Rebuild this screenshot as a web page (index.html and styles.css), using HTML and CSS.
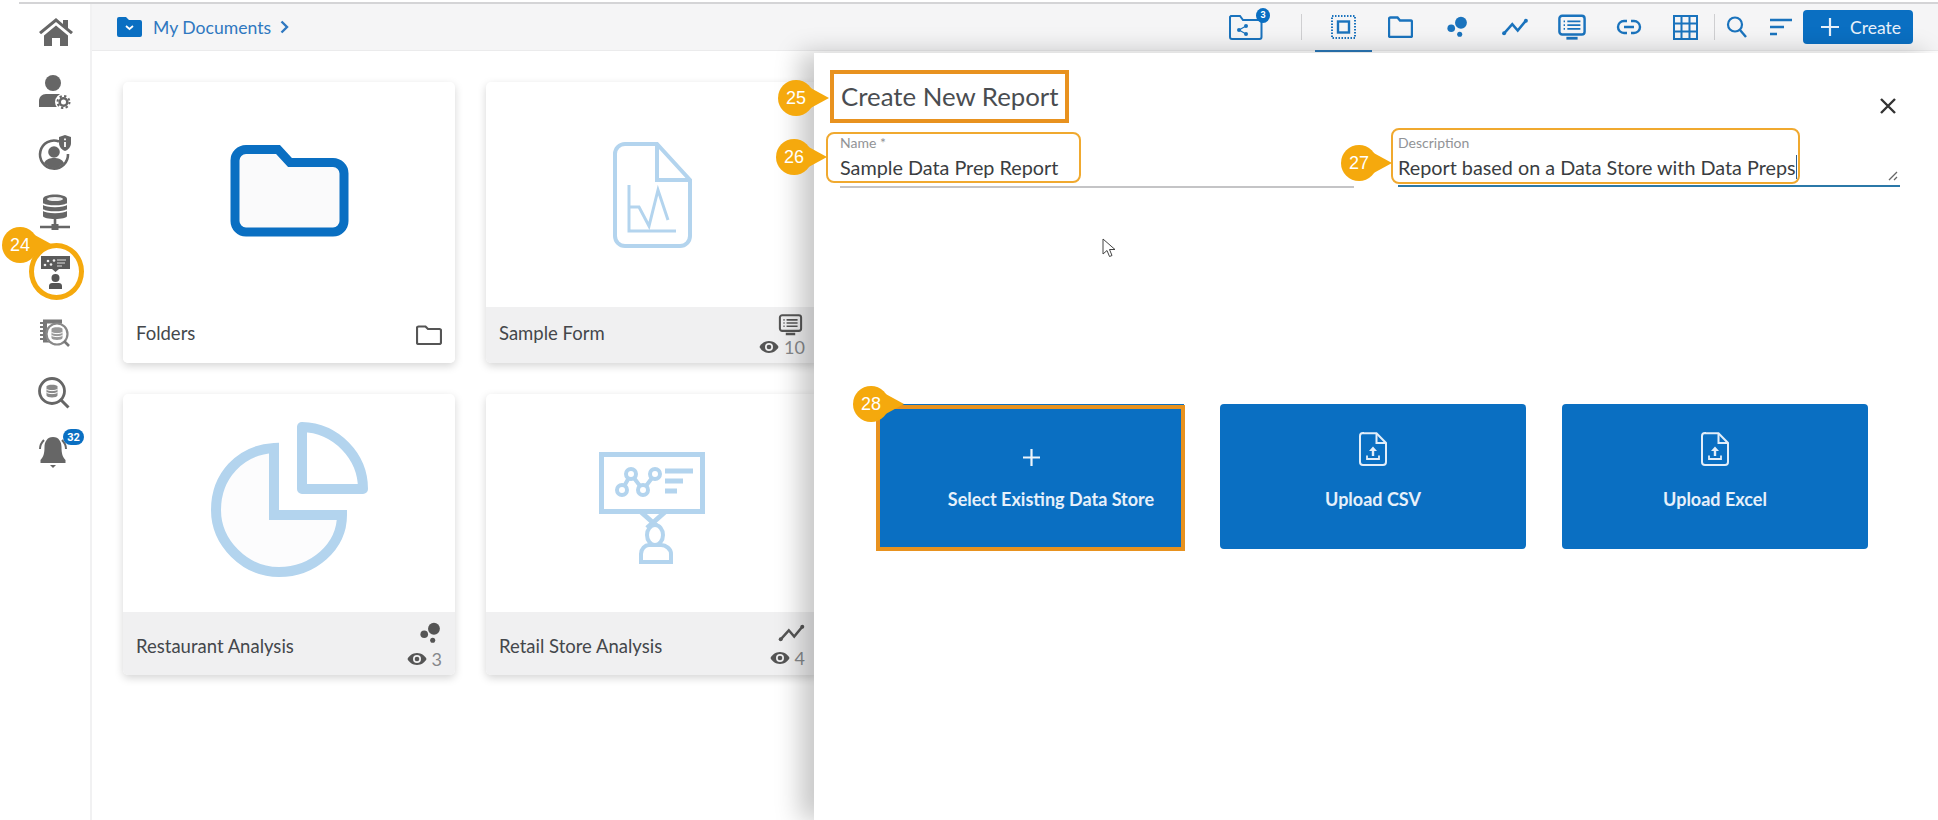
FILE: index.html
```html
<!DOCTYPE html>
<html lang="en">
<head>
<meta charset="utf-8">
<title>Create New Report</title>
<link rel="stylesheet" href="styles.css">
</head>
<body>
<svg class="defs" width="0" height="0" aria-hidden="true">
  <symbol id="eye" viewBox="0 0 20 14"><path d="M10 1C5.500 1 2 3.800 .5 7 2 10.200 5.500 13 10 13s8-2.800 9.500-6C18 3.800 14.500 1 10 1z" fill="#555"/><circle cx="10" cy="7" r="4" fill="#f0f0f1"/><circle cx="10" cy="7" r="2.300" fill="#555"/></symbol>
  <symbol id="form" viewBox="0 0 30 28"><rect x="1.500" y="1.500" width="27" height="20" rx="3" fill="none" stroke="currentColor" stroke-width="2.600"/><path d="M10 7.500h14M10 11.500h14M10 15.500h14M6 7.500h1.500M6 11.500h1.500M6 15.500h1.500" stroke="currentColor" stroke-width="2"/><path d="M9 24h12v3H9z" fill="currentColor"/></symbol>
  <symbol id="dots" viewBox="0 0 26 26"><circle cx="16.500" cy="8" r="7" fill="currentColor"/><circle cx="5" cy="14.500" r="4.500" fill="currentColor"/><circle cx="15" cy="21.500" r="3" fill="currentColor"/></symbol>
  <symbol id="trend" viewBox="0 0 30 22"><path d="M3 18l9-10 6 7 9-11" fill="none" stroke="currentColor" stroke-width="2.800"/><circle cx="3" cy="18" r="2.200" fill="currentColor"/><circle cx="27" cy="4" r="2.200" fill="currentColor"/></symbol>
  <symbol id="upload" viewBox="0 0 28 34"><path d="M4 1.200h13.500L27 11v19a3 3 0 0 1-3 3H4a3 3 0 0 1-3-3V4a3 3 0 0 1 3-3z" fill="none" stroke="#e3eef9" stroke-width="2"/><path d="M17.500 1.500V11H27" fill="none" stroke="#e3eef9" stroke-width="2"/><path d="M14 14.500l4 4.500h-2.800v5h-2.400v-5H10z" fill="#e3eef9"/><path d="M8 23.500V27h12v-3.500" fill="none" stroke="#e3eef9" stroke-width="1.800"/></symbol>
</svg>

<div class="shell">
  <aside class="sidebar">
    <ul class="nav">
      <li class="nav-item"><svg width="40" height="40" viewBox="0 0 40 40"><path d="M4 20L21 6l7 6V8h5v8l5 4-2 2.300L21 10 6 22.300zM9 23.500L21 13.500l12 10V34h-8v-8h-8v8H9z" fill="#666"/></svg></li>
      <li class="nav-item"><svg width="40" height="40" viewBox="0 0 40 40"><circle cx="18" cy="11" r="8" fill="#666"/><path d="M4 35v-6c0-4 3-7 7-7h13c3 0 5 3 5 6v7z" fill="#666"/><circle cx="28.500" cy="30" r="8.500" fill="#fff"/><circle cx="28.500" cy="30" r="3.800" fill="#fff" stroke="#666" stroke-width="2.600"/><circle cx="28.500" cy="30" r="6" fill="none" stroke="#666" stroke-width="2" stroke-dasharray="2.300 2.400"/></svg></li>
      <li class="nav-item"><svg width="40" height="40" viewBox="0 0 40 40"><path d="M24 9.500A14 14 0 1 0 33 22" fill="none" stroke="#666" stroke-width="2.600"/><circle cx="19" cy="20" r="5.800" fill="#666"/><path d="M9 31c2-4 6-5 10-5s8 1 10 5c-3 3-6 5-10 5s-7-2-10-5z" fill="#666"/><path d="M30 3l6 2v6c0 4-3 7-6 8-3-1-6-4-6-8V5z" fill="#666"/><path d="M30 6.500v1.800M30 10v5" stroke="#fff" stroke-width="1.800"/></svg></li>
      <li class="nav-item"><svg width="40" height="40" viewBox="0 0 40 40"><path d="M8 7c0-6 24-6 24 0v17c0 4-24 4-24 0z" fill="#666"/><ellipse cx="20" cy="7" rx="8" ry="2" fill="#eee"/><path d="M8 12c4 3 20 3 24 0M8 18c4 3 20 3 24 0" stroke="#fff" stroke-width="1.800" fill="none"/><path d="M20 26v9M5 35h30" stroke="#666" stroke-width="2.600"/><rect x="16.500" y="32" width="7" height="6" fill="#666"/></svg></li>
      <li class="nav-item nav-item-on">
        <svg width="40" height="40" viewBox="0 0 40 40"><path d="M6 4h29v13H24l-3.500 3-3.500-3H6z" fill="#5a5a5a"/><g fill="#eee"><circle cx="10" cy="13" r="1.300"/><circle cx="13" cy="9" r="1.300"/><circle cx="16" cy="12.500" r="1.300"/><circle cx="19" cy="8.500" r="1.300"/></g><path d="M22 8h9M22 11h8M22 14h5" stroke="#ddd" stroke-width="1.200"/><circle cx="20.500" cy="26" r="4" fill="#555"/><path d="M14 37v-3c0-2 1.500-3 3-3h7c1.500 0 3 1 3 3v3z" fill="#555"/></svg>
        <span class="ring"></span>
        <span class="badge badge-24">24</span>
      </li>
      <li class="nav-item"><svg width="40" height="40" viewBox="0 0 40 40"><path d="M8 7.500h19v4H12v17h3v2H8z" fill="#777"/><path d="M5 11h5M5 15h5M5 19h5M5 23h5M5 27h5" stroke="#777" stroke-width="2"/><circle cx="22" cy="22" r="10.500" fill="#fff" stroke="#888" stroke-width="2.200"/><path d="M16.500 17c0-2.500 11-2.500 11 0v9c0 2.500-11 2.500-11 0z" fill="#999"/><path d="M16.500 20.500c3 1.500 8 1.500 11 0M16.500 23.500c3 1.500 8 1.500 11 0" stroke="#fff" fill="none"/><path d="M29 29l5 5" stroke="#777" stroke-width="2.600"/></svg></li>
      <li class="nav-item"><svg width="40" height="40" viewBox="0 0 40 40"><circle cx="17" cy="19" r="12.500" fill="none" stroke="#666" stroke-width="2.800"/><path d="M26 28l7.500 7.500" stroke="#666" stroke-width="3"/><path d="M11.500 14.500c0-2.500 11-2.500 11 0v9c0 2.500-11 2.500-11 0z" fill="#888"/><path d="M11.500 17.500c3 1.500 8 1.500 11 0M11.500 20.500c3 1.500 8 1.500 11 0" stroke="#fff" fill="none"/></svg></li>
      <li class="nav-item"><svg width="40" height="40" viewBox="0 0 40 40"><path d="M18 5c-6 0-8.500 5-8.500 10 0 6-1 10-4 13v3h25v-3c-3-3-4-7-4-13 0-5-2.500-10-8.500-10z" fill="#666"/><path d="M15 33h6l-3 3z" fill="#666"/><path d="M5 17c0-4 1.500-6.500 4-9M31 17c0-4-1.500-6.500-4-9" stroke="#666" stroke-width="2" fill="none"/></svg><span class="count count-nav">32</span></li>
    </ul>
  </aside>

  <div class="main">
    <header class="topbar">
      <div class="crumb">
        <svg width="25" height="20" viewBox="0 0 25 20"><path d="M2 0h7l3 3h11a2 2 0 0 1 2 2v13a2 2 0 0 1-2 2H2a2 2 0 0 1-2-2V2a2 2 0 0 1 2-2z" fill="#0a6fc2"/><path d="M9 9l3.500 3L16 9" fill="none" stroke="#fff" stroke-width="1.800"/></svg>
        <span class="crumb-text">My Documents</span>
        <svg width="9" height="14" viewBox="0 0 9 14"><path d="M1.500 1.500L7 7l-5.500 5.500" fill="none" stroke="#2f78c0" stroke-width="2.400"/></svg>
      </div>
      <div class="tools">
        <div class="share">
          <svg width="34" height="25" viewBox="0 0 34 25"><path d="M2 1h9l3 4h17a2 2 0 0 1 1.500 1.500V22a2 2 0 0 1-2 2H3a2 2 0 0 1-2-2V2z" fill="none" stroke="#1a73bd" stroke-width="2"/><g fill="#1a73bd"><circle cx="10" cy="15" r="2"/><circle cx="17" cy="11" r="2"/><circle cx="17" cy="19" r="2"/></g><path d="M10 15l7-4M10 15l7 4" stroke="#1a73bd" stroke-width="1.200"/></svg>
          <span class="count count-share">3</span>
        </div>
        <span class="divider divider-share"></span>
        <span class="tool tool-on"><svg width="25" height="24" viewBox="0 0 25 24"><rect x="1" y="1" width="23" height="22" fill="none" stroke="#1a73bd" stroke-width="2" stroke-dasharray="1.500 1.500"/><rect x="7" y="6.500" width="11" height="11" fill="none" stroke="#1a73bd" stroke-width="2.400"/></svg></span>
        <span class="tool"><svg width="25" height="22" viewBox="0 0 25 22"><path d="M2.500 1.500h7l2.500 3h10.500a1.500 1.500 0 0 1 1.500 1.500v13.500a1.500 1.500 0 0 1-1.500 1.500h-20A1.500 1.500 0 0 1 1 19.500V3a1.500 1.500 0 0 1 1.500-1.500z" fill="none" stroke="#1a73bd" stroke-width="2.400"/></svg></span>
        <span class="tool"><svg class="ink" width="22" height="22"><use href="#dots"/></svg></span>
        <span class="tool"><svg class="ink" width="28" height="20"><use href="#trend"/></svg></span>
        <span class="tool"><svg class="ink" width="28" height="27"><use href="#form"/></svg></span>
        <span class="tool"><svg width="26" height="16" viewBox="0 0 26 16"><path d="M11 2H8a6 6 0 0 0 0 12h3M15 2h3a6 6 0 0 1 0 12h-3M8 8h10" fill="none" stroke="#1a73bd" stroke-width="2.400"/></svg></span>
        <span class="tool"><svg width="25" height="25" viewBox="0 0 25 25"><path d="M1 1h23v23H1zM8.500 1v23M16.500 1v23M1 8.500h23M1 16.500h23" fill="none" stroke="#1a73bd" stroke-width="2"/></svg></span>
        <span class="divider"></span>
        <span class="tool tool-sm"><svg width="22" height="24" viewBox="0 0 22 24"><circle cx="9" cy="9.500" r="7" fill="none" stroke="#1a73bd" stroke-width="2.200"/><path d="M14 15l6 7" stroke="#1a73bd" stroke-width="2.400"/></svg></span>
        <span class="tool tool-md"><svg width="22" height="18" viewBox="0 0 22 18"><path d="M0 2h22M0 9h14M0 16h7" stroke="#1a73bd" stroke-width="2.400"/></svg></span>
        <button class="create" type="button"><svg width="18" height="18" viewBox="0 0 18 18"><path d="M9 0v18M0 9h18" stroke="#e8f1fa" stroke-width="2.200"/></svg>Create</button>
      </div>
    </header>

    <section class="cards">
      <article class="card">
        <div class="card-art"><svg class="art-up" width="119" height="92" viewBox="0 0 119 92"><path d="M16 4.500h32L60 17.500h43a11 11 0 0 1 11 11V76a11 11 0 0 1-11 11H16A11 11 0 0 1 5 76V15.500a11 11 0 0 1 11-11z" fill="#fafafb" stroke="#0a6fc2" stroke-width="9"/></svg></div>
        <footer class="card-foot card-foot-plain">
          <span class="card-name">Folders</span>
          <span class="card-meta"><svg width="26" height="20" viewBox="0 0 26 20"><path d="M2.500 1.500h7L12 4h11.500A1.500 1.500 0 0 1 25 5.500v12a1.500 1.500 0 0 1-1.500 1.500h-21A1.500 1.500 0 0 1 1 17.500V3a1.500 1.500 0 0 1 1.500-1.500z" fill="none" stroke="#555" stroke-width="2.200"/></svg></span>
        </footer>
      </article>
      <article class="card">
        <div class="card-art"><svg width="79" height="106" viewBox="0 0 79 106"><path d="M12 2h32l33 36v56a10 10 0 0 1-10 10H12A10 10 0 0 1 2 94V12A10 10 0 0 1 12 2zM44 2v36h33" fill="none" stroke="#b3d4ee" stroke-width="4"/><path d="M16 43v46h47" fill="none" stroke="#b3d4ee" stroke-width="3"/><path d="M16 65h10l10 19 9-36 10 30" fill="none" stroke="#b3d4ee" stroke-width="3"/></svg></div>
        <footer class="card-foot">
          <span class="card-name">Sample Form</span>
          <span class="card-meta"><svg class="ink-dark" width="29" height="22"><use href="#form"/></svg><span class="views"><svg width="20" height="14"><use href="#eye"/></svg>10</span></span>
        </footer>
      </article>
      <article class="card card-low">
        <div class="card-art"><svg class="art-up" width="157" height="155" viewBox="0 0 157 155"><path d="M91 5v62h61C152 34 125 6 91 5z" fill="none" stroke="#b3d4ee" stroke-width="10" stroke-linejoin="round"/><path d="M63 26v67h68c0 32-29 57-63 57S5 121 5 88c0-34 24-60 58-62z" fill="#fcfcfd" stroke="#b3d4ee" stroke-width="10"/></svg></div>
        <footer class="card-foot">
          <span class="card-name">Restaurant Analysis</span>
          <span class="card-meta"><svg class="ink-dark" width="22" height="22"><use href="#dots"/></svg><span class="views"><svg width="20" height="14"><use href="#eye"/></svg>3</span></span>
        </footer>
      </article>
      <article class="card card-low">
        <div class="card-art"><svg class="art-down" width="106" height="112" viewBox="0 0 106 112"><path d="M2.500 2.500h101v57h-101z" fill="none" stroke="#b3d4ee" stroke-width="5"/><path d="M23 38l9-16 12 16 12-16" fill="none" stroke="#b3d4ee" stroke-width="4"/><g fill="#fff" stroke="#b3d4ee" stroke-width="4"><circle cx="23" cy="38" r="5"/><circle cx="32" cy="22" r="5"/><circle cx="44" cy="38" r="5"/><circle cx="56" cy="22" r="5"/></g><path d="M66 19h28M66 29h18M66 39h12M42 60l18 16M66 60L48 76" fill="none" stroke="#b3d4ee" stroke-width="5"/><ellipse cx="56" cy="83" rx="8" ry="10" fill="#fff" stroke="#b3d4ee" stroke-width="4"/><path d="M42 110v-8c0-5 4-9 8-9h12c5 0 10 4 10 9v8z" fill="#fff" stroke="#b3d4ee" stroke-width="4"/></svg></div>
        <footer class="card-foot">
          <span class="card-name">Retail Store Analysis</span>
          <span class="card-meta"><svg class="ink-dark" width="27" height="20"><use href="#trend"/></svg><span class="views"><svg width="20" height="14"><use href="#eye"/></svg>4</span></span>
        </footer>
      </article>
    </section>

    <section class="panel">
      <div class="panel-head">
        <h2 class="panel-title">Create New Report</h2>
        <button class="close" type="button" aria-label="Close"><svg width="16" height="16" viewBox="0 0 16 16"><path d="M1 1l14 14M15 1L1 15" stroke="#333" stroke-width="2.400"/></svg></button>
      </div>
      <div class="fields">
        <div class="field">
          <label class="field-label">Name *</label>
          <div class="field-value">Sample Data Prep Report</div>
          <span class="mark mark-name"></span>
        </div>
        <div class="field field-on">
          <label class="field-label">Description</label>
          <div class="field-value"><span class="caret">Report based on a Data Store with Data Preps</span></div>
          <span class="mark mark-desc"></span>
          <svg class="grip" width="10" height="10" viewBox="0 0 10 10"><path d="M1 9l8-8M6 9l3-3" stroke="#666" stroke-width="1.300"/></svg>
        </div>
      </div>
      <div class="actions">
        <button class="action action-on" type="button">
          <span class="action-icon"><svg width="17" height="17" viewBox="0 0 17 17"><path d="M8.500 0v17M0 8.500h17" stroke="#eef5fb" stroke-width="2.200"/></svg></span>
          <span class="action-text action-text-shift">Select Existing Data Store</span>
        </button>
        <button class="action" type="button">
          <span class="action-icon"><svg width="28" height="34"><use href="#upload"/></svg></span>
          <span class="action-text">Upload CSV</span>
        </button>
        <button class="action" type="button">
          <span class="action-icon"><svg width="28" height="34"><use href="#upload"/></svg></span>
          <span class="action-text">Upload Excel</span>
        </button>
      </div>
      <span class="badge badge-25">25</span>
      <span class="badge badge-26">26</span>
      <span class="badge badge-27">27</span>
      <span class="badge badge-28">28</span>
      <svg class="pointer" width="14" height="20" viewBox="0 0 14 20"><path d="M1 1v15l4-3.500 2.500 6 2.500-1-2.500-6H13z" fill="#fff" stroke="#444" stroke-width="1"/></svg>
    </section>
  </div>
</div>
</body>
</html>
```
FILE: styles.css
```css
* { box-sizing: border-box; }
html, body { margin: 0; padding: 0; height: 100%; }
body {
  overflow: hidden;
  background: #fff;
  font-family: "Lato", "Noto Sans", sans-serif;
  color: #3f4247;
}
.defs { position: absolute; }
ul { list-style: none; margin: 0; padding: 0; }
button { font: inherit; border: 0; padding: 0; background: none; }
svg { display: block; flex: none; }

.shell {
  display: flex;
  height: 818px;
  margin: 2px 0 0 19px;
  border-top: 2px solid #d4d4d6;
}

/* sidebar */
.sidebar { width: 73px; flex: none; border-right: 2px solid #f1f1f2; background: #fff; }
.nav { margin-top: -2px; }
.nav-item { position: relative; height: 60px; display: flex; align-items: center; padding-left: 16px; }
.ring {
  position: absolute; left: 10px; top: 1px; width: 55px; height: 57px;
  border: 5px solid #f5a90d; border-radius: 50%;
}
.count {
  position: absolute; display: flex; align-items: center; justify-content: center;
  background: #0a6fc2; color: #fff; font-weight: 700; font-family: "Roboto", sans-serif;
}
.count-nav { left: 44px; top: 7px; width: 21px; height: 16px; border-radius: 8px; font-size: 11px; }
.count-share { left: 27px; top: -7px; width: 14px; height: 15px; border-radius: 50%; font-size: 9px; }

/* callout badges */
.badge {
  position: absolute; width: 36px; height: 36px; border-radius: 50%;
  background: #f5a90d; color: #fff; z-index: 5;
  font: 18px/36px "Liberation Sans", Arial, sans-serif; text-align: center;
}
.badge::after {
  content: ""; position: absolute; left: 18px; top: 0; width: 33px; height: 36px;
  background: #f5a90d; clip-path: polygon(0 0, 100% 50%, 0 100%); z-index: -1;
}
.badge-24 { left: -17px; top: -15px; }
.badge-25 { left: -36px; top: 27px; }
.badge-26 { left: -38px; top: 86px; }
.badge-27 { left: 527px; top: 92px; }
.badge-28 { left: 39px; top: 333px; }

/* main column */
.main { position: relative; flex: 1; min-width: 0; overflow: hidden; }
.topbar {
  display: flex; align-items: center; justify-content: space-between;
  height: 47px; padding: 0 25px 0 25px;
  background: #f5f5f6; border-bottom: 1px solid #ebebec;
}
.crumb { display: flex; align-items: center; gap: 11px; }
.crumb-text { font-size: 17.600px; color: #2f78c0; margin-right: -2px; }
.tools { display: flex; align-items: center; height: 100%; }
.share { position: relative; width: 34px; margin-right: 38px; }
.divider { width: 1px; height: 26px; background: #cfcfd1; }
.divider-share { margin-right: 13px; }
.tool { position: relative; width: 57px; height: 100%; display: flex; align-items: center; justify-content: center; }
.tool-sm { width: 43px; }
.tool-md { width: 45px; }
.tool-on::after { content: ""; position: absolute; left: 0; right: 0; bottom: -2px; height: 2px; background: #2b78b8; }
.ink { color: #1a73bd; }
.ink-dark { color: #555; }
.create {
  display: flex; align-items: center; gap: 11px;
  width: 110px; height: 34px; padding-left: 18px;
  border-radius: 4px; background: #0a6fc2; color: #e8f1fa; font-size: 17.500px;
}

/* cards */
.cards { display: grid; grid-template-columns: repeat(2, 332px); gap: 31px; padding: 31px 0 0 31px; }
.card {
  display: flex; flex-direction: column; height: 281px;
  border-radius: 5px; overflow: hidden; background: #fff;
  box-shadow: 0 3px 9px rgba(0,0,0,.17);
}
.card-art { flex: 1; display: flex; align-items: center; justify-content: center; }
.art-up { margin-bottom: 7px; }
.art-down { margin-top: 9px; }
.card-foot {
  display: flex; align-items: center; justify-content: space-between;
  height: 56px; padding: 0 13px; background: #f0f0f1;
}
.card-low .card-foot { height: 63px; padding-top: 4px; }
.card-foot-plain { background: #fff; }
.card-name { margin-bottom: 4px; font-size: 18.500px; color: #44474b; }
.card-low .card-name { margin-bottom: 0; }
.card-meta { display: flex; flex-direction: column; align-items: flex-end; gap: 1px; color: #86888b; font-size: 18px; line-height: 20px; }
.card-low .card-meta { gap: 5px; }
.views { display: flex; align-items: center; gap: 5px; }

/* slide-over panel */
.panel {
  position: absolute; left: 722px; top: 49px; right: 0; bottom: 0;
  padding: 17px 38px 0 26px; background: #fff;
  box-shadow: -14px 0 24px rgba(0,0,0,.22);
}
.panel-head { display: flex; justify-content: space-between; }
.panel-title {
  margin: 0 0 0 -10px; height: 53px; width: 239px; padding-left: 7px;
  border: 4px solid #e8921f;
  font-size: 25.800px; font-weight: 400; line-height: 45px; color: #4a4d51; white-space: nowrap;
}
.close { align-self: flex-end; margin: 0 4px 9px 0; }
.fields { display: grid; grid-template-columns: 514px 502px; gap: 44px; margin-top: 11px; }
.field { position: relative; height: 54px; border-bottom: 2px solid #c4c4c6; }
.field-on { height: 53px; border-bottom-color: #2b78a8; }
.field-label { display: block; margin-top: 1px; font-size: 14px; line-height: 16px; color: #919396; }
.field-value { margin-top: 4px; font-size: 19.800px; line-height: 24px; color: #3a3d41; white-space: nowrap; }
.caret { border-right: 1px solid #2b5f8f; }
.mark { position: absolute; border: 2px solid #f0a92f; border-radius: 8px; }
.mark-name { left: -14px; top: -2px; width: 255px; height: 51px; }
.mark-desc { left: -7px; top: -6px; width: 409px; height: 56px; }
.grip { position: absolute; right: 2px; bottom: 4px; }

.actions { display: grid; grid-template-columns: repeat(3, 306px); gap: 36px; margin-top: 216px; padding-left: 38px; }
.action {
  position: relative; display: flex; flex-direction: column; align-items: center;
  height: 145px; padding-top: 28px;
  border-radius: 4px; background: #0a6fc2; color: #e6f0fa;
}
.action-on { border-radius: 0; }
.action-on::before {
  content: ""; position: absolute; left: -2px; right: -1px; top: 1px; bottom: -2px;
  border: 4px solid #e8921f;
}
.action-icon { height: 34px; display: flex; align-items: flex-end; }
.action-text { margin-top: 21px; font-size: 18px; font-weight: 700; line-height: 24px; }
.action-text-shift { margin-left: 40px; }
.pointer { position: absolute; left: 288px; top: 185px; }
```
